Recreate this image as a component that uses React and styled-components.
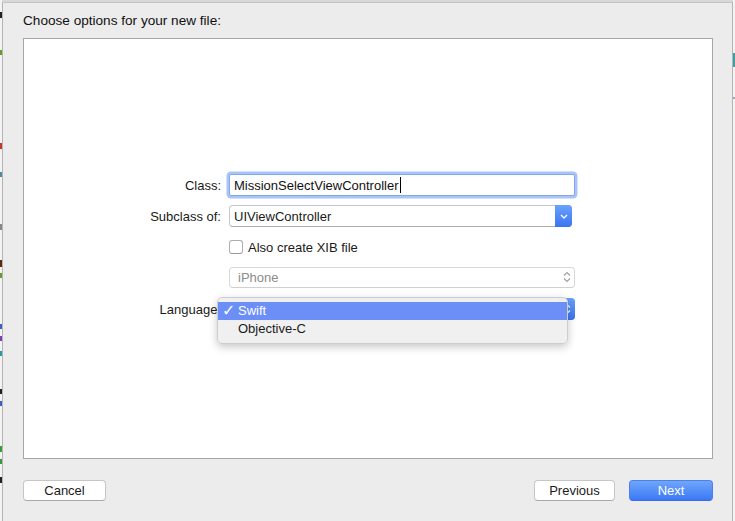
import React from "react";
import styled, { createGlobalStyle } from "styled-components";

const GlobalStyle = createGlobalStyle`
  html, body {
    margin: 0;
    padding: 0;
    background: #dcdcdc;
  }
  body {
    font-family: "Liberation Sans", Arial, sans-serif;
    -webkit-font-smoothing: antialiased;
  }
`;

const Page = styled.div`
  width: 735px;
  height: 521px;
  display: flex;
  background: #d8d8d8;
  overflow: hidden;
`;

/* the editor window behind the sheet, only a sliver of it shows */
const BackdropEdge = styled.div`
  width: 2px;
  flex: none;
  display: flex;
  flex-direction: column;
  background: #f3f3f3;
`;

const CodeBit = styled.div`
  width: 2px;
  height: ${(p) => p.$h || 6}px;
  margin-top: ${(p) => p.$top}px;
  background: ${(p) => p.$color};
  flex: none;
`;

const Dialog = styled.div`
  width: 731px;
  box-sizing: border-box;
  flex: none;
  margin-top: 2px;
  display: flex;
  flex-direction: column;
  background: #ececec;
  border-left: 1px solid #b4b4b4;
  border-right: 1px solid #b4b4b4;
  border-top: 1px solid #c4c4c4;
  padding: 0 19px 0 20px;
`;

const Title = styled.div`
  padding-top: 10px;
  height: 16px;
  line-height: 16px;
  font-size: 13.6px;
  color: #111;
  margin-bottom: 9px;
`;

const ContentBox = styled.div`
  box-sizing: border-box;
  height: 421px;
  background: #ffffff;
  border: 1px solid #a6a6a6;
  display: flex;
  flex-direction: column;
  padding: 135px 0 0 97px;
`;

const FieldRow = styled.div`
  display: grid;
  grid-template-columns: 100px 346px;
  column-gap: 8px;
  align-items: center;
  height: 22px;
  margin-top: ${(p) => p.$gap || 0}px;
`;

const Label = styled.div`
  text-align: right;
  font-size: 13px;
  color: #1a1a1a;
  white-space: nowrap;
`;

const TextField = styled.div`
  box-sizing: border-box;
  height: 22px;
  width: 346px;
  border: 1px solid #86a7ea;
  border-radius: 2px;
  box-shadow: 0 0 0 2.5px #a9c4f6;
  background: #fff;
  display: flex;
  align-items: center;
  padding-left: 4px;
  font-size: 13px;
  color: #111;
`;

const Caret = styled.span`
  display: inline-block;
  width: 1px;
  height: 16px;
  background: #000;
  margin-left: 1px;
`;

const Popup = styled.div`
  position: relative;
  box-sizing: border-box;
  height: ${(p) => (p.$disabled ? 21 : 22)}px;
  width: ${(p) => p.$width || 346}px;
  display: flex;
  align-items: center;
  background: #fff;
  border: 1px solid ${(p) => (p.$disabled ? "#d8d8d8" : "#c6c6c6")};
  border-bottom-color: ${(p) => (p.$disabled ? "#d0d0d0" : "#acacac")};
  border-radius: 4px;
  font-size: 13px;
  color: ${(p) => (p.$disabled ? "#8c8c8c" : "#1a1a1a")};
`;

const PopupText = styled.span`
  flex: 1;
  padding-left: ${(p) => p.$pad || 4}px;
`;

const ArrowCap = styled.div`
  align-self: stretch;
  width: 17px;
  margin: -1px -1px -1px 0;
  border-radius: 0 4px 4px 0;
  background: ${(p) =>
    p.$blue ? "linear-gradient(#6aa2fb, #3a74f3)" : "transparent"};
  display: flex;
  align-items: center;
  justify-content: center;
`;

const CheckRow = styled.label`
  display: flex;
  align-items: center;
  gap: 5px;
  font-size: 13px;
  color: #1a1a1a;
`;

const CheckBox = styled.span`
  box-sizing: border-box;
  width: 14px;
  height: 14px;
  border: 1px solid #adadad;
  border-bottom-color: #999;
  border-radius: 3px;
  background: #fff;
`;

const Menu = styled.div`
  position: absolute;
  left: -13px;
  top: -2px;
  width: 351px;
  box-sizing: border-box;
  padding: 4px 0 5px;
  background: rgba(240, 240, 240, 0.98);
  border: 1px solid #cdcdcd;
  border-radius: 5px;
  box-shadow: 0 3px 9px rgba(0, 0, 0, 0.22);
  z-index: 2;
`;

const MenuItem = styled.div`
  position: relative;
  height: 18px;
  line-height: 18px;
  padding-left: 20px;
  font-size: 13px;
  color: ${(p) => (p.$active ? "#fff" : "#1a1a1a")};
  background: ${(p) => (p.$active ? "#6b8ef7" : "transparent")};
`;

const Check = styled.span`
  position: absolute;
  left: 4px;
  top: 0;
  font-family: "DejaVu Sans", sans-serif;
  font-size: 16px;
  line-height: 18px;
`;

const Footer = styled.div`
  display: flex;
  align-items: center;
  gap: 14px;
  margin-top: 21px;
`;

const Button = styled.button`
  box-sizing: border-box;
  width: ${(p) => p.$w}px;
  height: 21px;
  padding: 0;
  margin-left: ${(p) => (p.$push ? "auto" : "0")};
  font-family: inherit;
  font-size: 13px;
  border-radius: 4px;
  color: ${(p) => (p.$primary ? "#fff" : "#1a1a1a")};
  background: ${(p) =>
    p.$primary ? "linear-gradient(#6fa6fb, #3b78f5)" : "#fff"};
  border: 1px solid ${(p) => (p.$primary ? "#4c80f1" : "#c6c6c6")};
  border-bottom-color: ${(p) => (p.$primary ? "#3a6ae8" : "#a9a9a9")};
`;

const ChevronDown = () => (
  <svg width="8" height="5" viewBox="0 0 8 5">
    <path d="M1 1 L4 4 L7 1" fill="none" stroke="#fff" strokeWidth="1.4" />
  </svg>
);

const UpDown = ({ color }) => (
  <svg width="8" height="12" viewBox="0 0 8 12">
    <path
      d="M1 4.5 L4 1.5 L7 4.5 M1 7.5 L4 10.5 L7 7.5"
      fill="none"
      stroke={color}
      strokeWidth="1.2"
    />
  </svg>
);

const leftBits = [
  { top: 12, h: 6, color: "#222" },
  { top: 32, h: 5, color: "#6a9a2a" },
  { top: 88, h: 6, color: "#c0392b" },
  { top: 23, h: 5, color: "#4f8a9a" },
  { top: 47, h: 6, color: "#888" },
  { top: 30, h: 7, color: "#5a2a10" },
  { top: 6, h: 5, color: "#6a9a2a" },
  { top: 46, h: 5, color: "#3a5fc8" },
  { top: 7, h: 5, color: "#7a3fb0" },
  { top: 10, h: 5, color: "#2a9a9a" },
  { top: 33, h: 5, color: "#222" },
  { top: 7, h: 5, color: "#3a5fc8" },
  { top: 40, h: 6, color: "#3a9a3a" },
  { top: 7, h: 5, color: "#3a9a3a" },
  { top: 13, h: 6, color: "#222" },
];

export default function App() {
  return (
    <>
      <GlobalStyle />
      <Page>
        <BackdropEdge>
          {leftBits.map((b, i) => (
            <CodeBit key={i} $top={b.top} $h={b.h} $color={b.color} />
          ))}
        </BackdropEdge>
        <Dialog>
          <Title>Choose options for your new file:</Title>
          <ContentBox>
            <FieldRow>
              <Label>Class:</Label>
              <TextField>
                MissionSelectViewController
                <Caret />
              </TextField>
            </FieldRow>
            <FieldRow $gap={9}>
              <Label>Subclass of:</Label>
              <Popup $width={343}>
                <PopupText>UIViewController</PopupText>
                <ArrowCap $blue>
                  <ChevronDown />
                </ArrowCap>
              </Popup>
            </FieldRow>
            <FieldRow $gap={9}>
              <span />
              <CheckRow>
                <CheckBox />
                Also create XIB file
              </CheckRow>
            </FieldRow>
            <FieldRow $gap={8}>
              <span />
              <Popup $disabled>
                <PopupText $pad={8}>iPhone</PopupText>
                <ArrowCap>
                  <UpDown color="#a0a0a0" />
                </ArrowCap>
              </Popup>
            </FieldRow>
            <FieldRow $gap={10}>
              <Label>Language:</Label>
              <Popup>
                <PopupText $pad={8} />
                <ArrowCap $blue>
                  <UpDown color="#fff" />
                </ArrowCap>
                <Menu>
                  <MenuItem $active>
                    <Check>✓</Check>
                    Swift
                  </MenuItem>
                  <MenuItem>Objective-C</MenuItem>
                </Menu>
              </Popup>
            </FieldRow>
          </ContentBox>
          <Footer>
            <Button $w={83}>Cancel</Button>
            <Button $w={81} $push>
              Previous
            </Button>
            <Button $w={84} $primary>
              Next
            </Button>
          </Footer>
        </Dialog>
        <BackdropEdge>
          <CodeBit $top={53} $h={14} $color="#3aa0a0" />
          <CodeBit $top={30} $h={2} $color="#9ab" />
        </BackdropEdge>
      </Page>
    </>
  );
}
